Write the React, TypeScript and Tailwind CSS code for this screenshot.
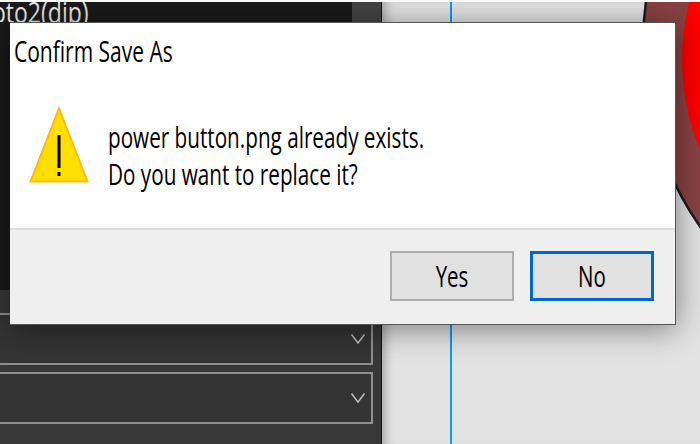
function Chevron() {
  return (
    <svg width="16" height="12" viewBox="0 0 16 12" fill="none" stroke="#bdbdbd" strokeWidth="1.5">
      <path d="M1.5 1.5 8 10l6.5-8.5" />
    </svg>
  );
}

function Dropdown() {
  return (
    <div className="h-[52px] -ml-1 border-2 border-[#8f8f8f] bg-[#343434] flex items-center justify-end pr-[5px]">
      <Chevron />
    </div>
  );
}

function WarningIcon() {
  return (
    <svg width="60" height="76" viewBox="0 0 60 76" className="shrink-0">
      <path d="M30 1.5 58.5 74.5H1.5Z" fill="#ffdf00" stroke="#fdb913" strokeWidth="2" />
      <rect x="28.5" y="28" width="3" height="33" fill="#000" />
      <rect x="28.5" y="65" width="3" height="4" fill="#000" />
    </svg>
  );
}

function DialogButton({ label, focused }: { label: string; focused?: boolean }) {
  return (
    <button
      className={`w-[124px] h-[50px] bg-[#e1e1e1] flex items-center justify-center text-[20.5px] text-black ${
        focused ? "border-[3px] border-[#0067d0]" : "border-2 border-[#adadad]"
      }`}
    >
      <span className="inline-block scale-y-[1.4]">{label}</span>
    </button>
  );
}

export default function App() {
  return (
    <div className="relative w-[700px] h-[444px] overflow-hidden bg-white flex flex-col font-['Open_Sans',sans-serif]">
      <div className="flex flex-1 mt-[2px] min-h-0">
        {/* left tool panel */}
        <div className="w-[382px] shrink-0 flex flex-col bg-[#383838] border-r border-[#141414]">
          <div className="h-5 flex bg-[#1a1a1a] overflow-hidden">
            <span className="flex-1 -ml-[8px] text-[23px] leading-[18px] text-[#e8e8e8]">
              <span className="inline-block scale-y-[1.3]">oto2(dip)</span>
            </span>
            <div className="w-[29px] bg-[#444444]" />
          </div>
          <div className="h-[268px] bg-[#1a1a1a]" />
          <div className="flex-1 pt-[23px] pr-[8px] flex flex-col">
            <Dropdown />
            <div className="mt-[7px]">
              <Dropdown />
            </div>
          </div>
        </div>

        {/* canvas */}
        <div className="relative flex-1 bg-[#e3e3e3] shadow-[inset_10px_0_10px_-6px_rgba(0,0,0,0.25)] overflow-hidden">
          <div className="absolute left-[68px] top-0 bottom-0 w-[2px] bg-[#0a9bff]" />
          <svg width="318" height="442" viewBox="382 2 318 442" className="absolute inset-0">
            <circle cx="960" cy="45" r="317" fill="#8a4242" stroke="#1c1c1c" strokeWidth="2.5" />
            <circle cx="917" cy="60" r="235" fill="#fe0000" />
          </svg>
        </div>
      </div>

      {/* confirm dialog */}
      <div className="absolute left-[10px] top-[22px] w-[666px] h-[303px] flex flex-col bg-white border-r border-b border-t border-[#555555] shadow-[0_4px_30px_rgba(0,0,0,0.45)]">
        <div className="h-[205px] flex flex-col">
          <div className="pl-[4px] pt-[16px] text-[21px] leading-6 text-black">
            <span className="inline-block scale-y-[1.4]">Confirm Save As</span>
          </div>
          <div className="flex gap-[19px] pl-[19px] pt-[44px]">
            <WarningIcon />
            <div className="text-[20.7px] leading-[37px] text-black pt-[12px]">
              <p className="scale-y-[1.4]">power button.png already exists.</p>
              <p className="scale-y-[1.4]">Do you want to replace it?</p>
            </div>
          </div>
        </div>
        <div className="flex-1 bg-[#efefef] border-t-2 border-[#dedede] flex justify-end items-start gap-4 pr-[21px] pt-[21px]">
          <DialogButton label="Yes" />
          <DialogButton label="No" focused />
        </div>
      </div>
    </div>
  );
}
